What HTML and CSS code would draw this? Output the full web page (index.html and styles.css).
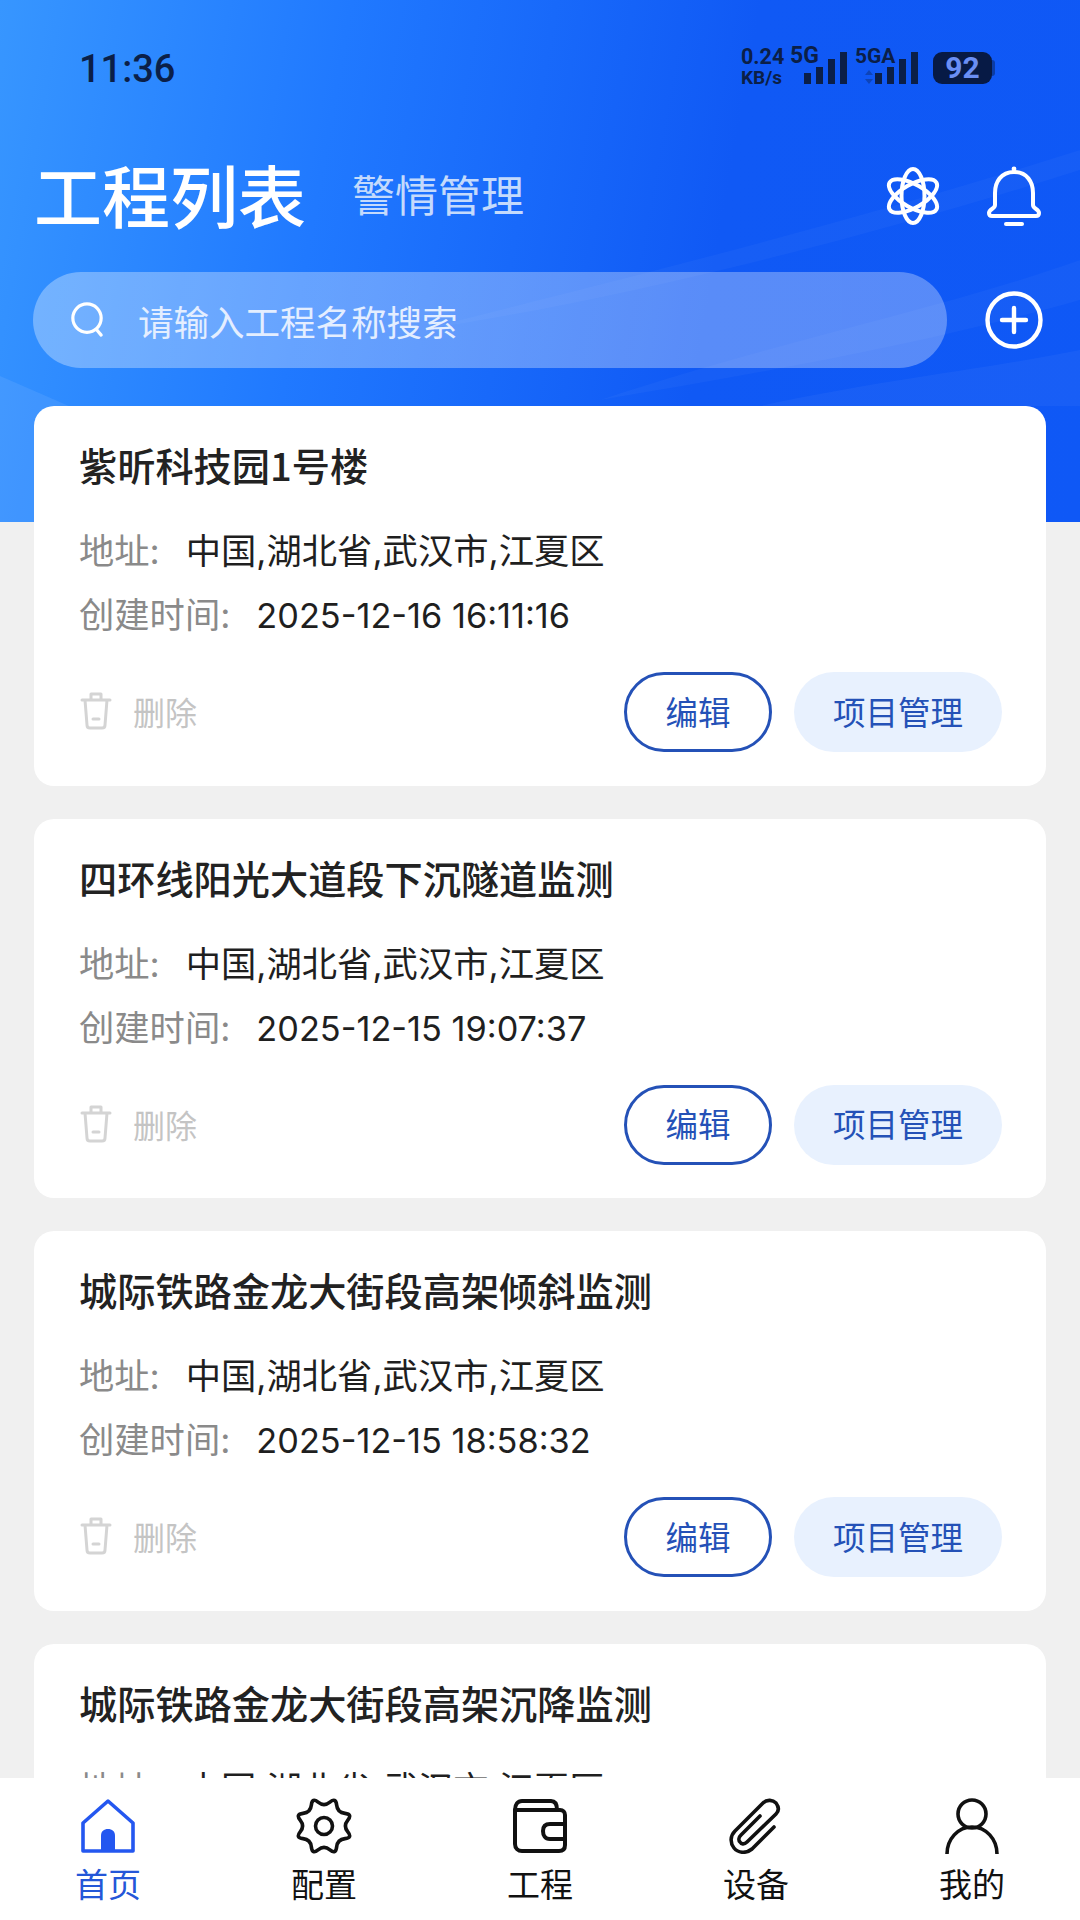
FILE: index.html
```html
<!DOCTYPE html>
<html lang="zh-CN">

<head>
  <meta charset="UTF-8">
  <meta name="viewport" content="width=device-width, initial-scale=1.0">
  <title>工程列表</title>
  <link rel="stylesheet" href="styles.css">
</head>

<body>
  <div class="app">
    <div class="hero">
      <svg class="hero-waves" viewBox="0 0 1080 522" preserveAspectRatio="none">
        <path d="M0 376 L170 450 L170 522 L0 522 Z" fill="#fff" opacity="0.08" />
        <path d="M420 330 C620 280 860 220 1080 150 L1080 170 C860 240 620 300 420 330 Z" fill="#fff" opacity="0.03" />
        <path d="M600 400 C780 340 940 310 1080 260 L1080 300 C940 340 780 370 600 400 Z" fill="#fff" opacity="0.03" />
        <path d="M760 406 C880 380 980 370 1080 350 L1080 406 Z" fill="#fff" opacity="0.04" />
      </svg>

      <div class="status-bar">
        <span class="clock">11:36</span>
        <div class="status-right">
          <div class="speed"><b>0.24</b><b>KB/s</b></div>
          <div class="net"><b>5G</b>
            <div class="bars"><i class="b1"></i><i class="b2"></i><i class="b3"></i><i class="b4"></i></div>
          </div>
          <div class="net net-a"><b>5GA</b>
            <svg class="net-arrows" viewBox="0 0 8 14" fill="#0b1f48">
              <path d="M4 0 L8 5 L0 5 Z M4 14 L8 9 L0 9 Z" />
            </svg>
            <div class="bars"><i class="b1"></i><i class="b2"></i><i class="b3"></i><i class="b4"></i></div>
          </div>
          <div class="battery">92</div>
        </div>
      </div>

      <div class="title-row">
        <h1>工程列表</h1>
        <span class="subtab">警情管理</span>
        <div class="title-icons">
          <svg class="icon-atom" viewBox="0 0 56 60" fill="none" stroke="#fff" stroke-width="4">
            <ellipse cx="28" cy="30" rx="11.5" ry="27" />
            <ellipse cx="28" cy="30" rx="11.5" ry="27" transform="rotate(60 28 30)" />
            <ellipse cx="28" cy="30" rx="11.5" ry="27" transform="rotate(120 28 30)" />
          </svg>
          <svg class="icon-bell" viewBox="0 0 56 60" fill="none" stroke="#fff" stroke-width="4" stroke-linecap="round" stroke-linejoin="round">
            <path d="M28 6 C15 6 9 16 9 27 L9 39 C9 43 3 43 3 47 C3 49 4 50 6 50 L50 50 C52 50 53 49 53 47 C53 43 47 43 47 39 L47 27 C47 16 41 6 28 6 Z" />
            <path d="M20 58 L36 58" />
            <circle cx="28" cy="3" r="2.4" fill="#fff" stroke="none" />
          </svg>
        </div>
      </div>

      <div class="search-row">
        <div class="search-box">
          <svg class="icon-search" viewBox="0 0 36 38" fill="none" stroke="#fff" stroke-width="3.4" stroke-linecap="round">
            <circle cx="18" cy="17" r="15" />
            <path d="M28 29 L33 35" />
          </svg>
          <span>请输入工程名称搜索</span>
        </div>
        <svg class="icon-add" viewBox="0 0 58 58" fill="none" stroke="#fff" stroke-width="4.4" stroke-linecap="round">
          <circle cx="29" cy="29" r="26.5" />
          <path d="M29 17 L29 41 M17 29 L41 29" />
        </svg>
      </div>
    </div>

    <div class="list">
      <div class="card">
        <div class="card-title">紫昕科技园1号楼</div>
        <p class="row"><span class="label">地址:</span>中国,湖北省,武汉市,江夏区</p>
        <p class="row"><span class="label">创建时间:</span><span class="time">2025-12-16 16:11:16</span></p>
        <div class="card-foot">
          <div class="delete">
            <svg class="icon-trash" viewBox="0 0 32 38" fill="none" stroke="#d4d4d4" stroke-width="3" stroke-linecap="round" stroke-linejoin="round">
              <path d="M2 8 L30 8 M11 8 L11 2 L21 2 L21 8 M5 8 L7 33 C7 35 8 36 10 36 L22 36 C24 36 25 35 25 33 L27 8 M13 27 L19 27" />
            </svg>
            <span>删除</span>
          </div>
          <button class="btn btn-edit">编辑</button>
          <button class="btn btn-manage">项目管理</button>
        </div>
      </div>

      <div class="card">
        <div class="card-title">四环线阳光大道段下沉隧道监测</div>
        <p class="row"><span class="label">地址:</span>中国,湖北省,武汉市,江夏区</p>
        <p class="row"><span class="label">创建时间:</span><span class="time">2025-12-15 19:07:37</span></p>
        <div class="card-foot">
          <div class="delete">
            <svg class="icon-trash" viewBox="0 0 32 38" fill="none" stroke="#d4d4d4" stroke-width="3" stroke-linecap="round" stroke-linejoin="round">
              <path d="M2 8 L30 8 M11 8 L11 2 L21 2 L21 8 M5 8 L7 33 C7 35 8 36 10 36 L22 36 C24 36 25 35 25 33 L27 8 M13 27 L19 27" />
            </svg>
            <span>删除</span>
          </div>
          <button class="btn btn-edit">编辑</button>
          <button class="btn btn-manage">项目管理</button>
        </div>
      </div>

      <div class="card">
        <div class="card-title">城际铁路金龙大街段高架倾斜监测</div>
        <p class="row"><span class="label">地址:</span>中国,湖北省,武汉市,江夏区</p>
        <p class="row"><span class="label">创建时间:</span><span class="time">2025-12-15 18:58:32</span></p>
        <div class="card-foot">
          <div class="delete">
            <svg class="icon-trash" viewBox="0 0 32 38" fill="none" stroke="#d4d4d4" stroke-width="3" stroke-linecap="round" stroke-linejoin="round">
              <path d="M2 8 L30 8 M11 8 L11 2 L21 2 L21 8 M5 8 L7 33 C7 35 8 36 10 36 L22 36 C24 36 25 35 25 33 L27 8 M13 27 L19 27" />
            </svg>
            <span>删除</span>
          </div>
          <button class="btn btn-edit">编辑</button>
          <button class="btn btn-manage">项目管理</button>
        </div>
      </div>

      <div class="card">
        <div class="card-title">城际铁路金龙大街段高架沉降监测</div>
        <p class="row"><span class="label">地址:</span>中国,湖北省,武汉市,江夏区</p>
      </div>
    </div>

    <div class="tabbar">
      <div class="tab active">
        <svg viewBox="0 0 56 56" fill="none" stroke="#2457f0" stroke-width="3.6" stroke-linejoin="round">
          <path d="M28 3 L53 25 L53 53 L3 53 L3 25 Z" />
          <path d="M21 53 L21 38 C21 33 24 31 28 31 C32 31 35 33 35 38 L35 53 Z" fill="#2457f0" stroke="none" />
        </svg>
        <span>首页</span>
      </div>
      <div class="tab">
        <svg viewBox="0 0 56 56" fill="none" stroke="#111" stroke-width="3.6" stroke-linejoin="round">
          <path d="M33.93 4.18 Q39.86 -0.64 40.63 6.98 Q41.4 14.6 49.02 15.37 Q56.64 16.14 51.82 22.07 Q47 28 51.82 33.93 Q56.64 39.86 49.02 40.63 Q41.4 41.4 40.63 49.02 Q39.86 56.64 33.93 51.82 Q28 47 22.07 51.82 Q16.14 56.64 15.37 49.02 Q14.6 41.4 6.98 40.63 Q-0.64 39.86 4.18 33.93 Q9 28 4.18 22.07 Q-0.64 16.14 6.98 15.37 Q14.6 14.6 15.37 6.98 Q16.14 -0.64 22.07 4.18 Q28 9 33.93 4.18 Z" />
          <circle cx="28" cy="28" r="8.5" />
        </svg>
        <span>配置</span>
      </div>
      <div class="tab">
        <svg viewBox="0 0 56 56" fill="none" stroke="#111" stroke-width="4" stroke-linejoin="round" stroke-linecap="round">
          <path d="M3 12 C3 6 6 3 10 3 L39 3 C43 3 45 6 45 12" />
          <path d="M3 12 L3 46 C3 50 6 53 10 53 L47 53 C51 53 53 51 53 47 L53 17 C53 14 51 12 48 12 L3 12" />
          <path d="M53 26 L38 26 C33 26 31 29 31 33 C31 37 33 41 38 41 L53 41" />
        </svg>
        <span>工程</span>
      </div>
      <div class="tab">
        <svg viewBox="0 0 56 56" fill="none" stroke="#111" stroke-width="3.6" stroke-linecap="round" stroke-linejoin="round">
          <path d="M46 29 L24 51 C18 56 10 55 6 50 C2 45 2 38 7 33 L35 5 C39 1 45 2 48 5 C51 9 51 13 48 16 L19 44 C16 47 13 46 12 44 C10 42 11 39 13 37 L32 18" />
        </svg>
        <span>设备</span>
      </div>
      <div class="tab">
        <svg viewBox="0 0 56 56" fill="none" stroke="#111" stroke-width="3.6">
          <circle cx="28" cy="16" r="14" />
          <path d="M3 56 C3 41 14 29 28 29 C42 29 53 41 53 56" />
        </svg>
        <span>我的</span>
      </div>
    </div>
  </div>
</body>

</html>
```

FILE: styles.css
```css
body {
  margin: 0;
  padding: 0;
  background-color: #f0f0f0;
  font-family: "Noto Sans CJK SC", "Noto Sans", sans-serif;
}

.app {
  position: relative;
  width: 1080px;
  height: 1920px;
  overflow: hidden;
}

/* 顶部蓝色区域 */
.hero {
  position: relative;
  height: 522px;
  background: linear-gradient(100deg, #3796ff 0%, #2079ff 30%, #1059f5 65%, #0f58f6 100%);
}

.hero-waves {
  position: absolute;
  left: 0;
  top: 0;
  width: 1080px;
  height: 522px;
}

.status-bar {
  position: relative;
  height: 153px;
  padding: 46px 88px 0 79px;
  box-sizing: border-box;
  display: flex;
  justify-content: space-between;
  align-items: flex-start;
  color: #0b1f48;
}

.clock {
  font-family: Roboto, sans-serif;
  font-size: 38px;
  font-weight: 500;
  line-height: 46px;
}

.status-right {
  display: flex;
  align-items: flex-start;
}

.speed {
  display: flex;
  flex-direction: column;
  width: 42px;
  margin-right: 7px;
  font-family: Roboto, sans-serif;
  font-size: 19px;
  line-height: 21px;
  white-space: nowrap;
}

.speed b:first-child {
  font-size: 21.5px;
}

.net {
  position: relative;
  width: 57px;
  height: 38px;
  margin-right: 8px;
  font-family: Roboto, sans-serif;
  font-size: 23px;
  line-height: 20px;
}

.net-a {
  width: 63px;
  margin-right: 15px;
}

.net-a b {
  font-size: 21px;
}

.net-arrows {
  position: absolute;
  left: 10px;
  bottom: 0;
  width: 8px;
  height: 14px;
  opacity: 0.35;
}

.bars {
  position: absolute;
  right: 0;
  bottom: 0;
  display: flex;
  align-items: flex-end;
  gap: 5px;
}

.bars i {
  display: block;
  width: 7px;
  background-color: #0b1f48;
}

.bars .b1 { height: 11px; }
.bars .b2 { height: 17px; }
.bars .b3 { height: 25px; }
.bars .b4 { height: 32px; }

.battery {
  position: relative;
  width: 59px;
  height: 32px;
  margin-top: 6px;
  border-radius: 9px;
  background-color: #071a45;
  color: #6a8ff5;
  font-family: Roboto, sans-serif;
  font-size: 30px;
  font-weight: 700;
  line-height: 32px;
  text-align: center;
}

.battery::after {
  content: "";
  position: absolute;
  left: 59px;
  top: 8px;
  width: 3px;
  height: 16px;
  border-radius: 0 3px 3px 0;
  background-color: rgba(7, 26, 69, 0.45);
}

.title-row {
  position: relative;
  display: flex;
  align-items: center;
  height: 80px;
  padding: 0 38px 0 36px;
}

.title-row h1 {
  margin: 0;
  margin-left: -2px;
  font-size: 68px;
  font-weight: 500;
  color: #fff;
}

.subtab {
  margin-left: 46px;
  font-size: 43px;
  color: #c4dafc;
}

.title-icons {
  margin-left: auto;
  margin-top: 6px;
  display: flex;
  align-items: center;
  gap: 45px;
}

.icon-atom {
  width: 56px;
  height: 60px;
}

.icon-bell {
  width: 56px;
  height: 60px;
}

.search-row {
  position: relative;
  display: flex;
  align-items: center;
  justify-content: space-between;
  margin-top: 39px;
  padding: 0 37px 0 33px;
}

.search-box {
  display: flex;
  align-items: center;
  width: 914px;
  height: 96px;
  border-radius: 48px;
  box-sizing: border-box;
  padding-left: 37px;
  background: linear-gradient(90deg, rgba(255, 255, 255, 0.32), rgba(255, 255, 255, 0.3));
}

.search-box span {
  margin-left: 34px;
  font-size: 35.5px;
  color: #e4eeff;
}

.icon-search {
  width: 34px;
  height: 36px;
}

.icon-add {
  width: 58px;
  height: 58px;
}

/* 工程卡片 */
.list {
  position: absolute;
  left: 34px;
  top: 406px;
  width: 1012px;
  display: flex;
  flex-direction: column;
  gap: 33px;
}

.card {
  height: 379.5px;
  box-sizing: border-box;
  padding: 34px 44px 0 45px;
  background-color: #fff;
  border-radius: 20px;
}

.card-title {
  font-size: 38.2px;
  font-weight: 500;
  line-height: 50px;
  color: #222;
  margin-bottom: 30px;
}

.row {
  margin: 0;
  font-size: 35.3px;
  line-height: 64px;
  color: #1f1f1f;
  font-family: Inter, "Noto Sans CJK SC", sans-serif;
}

.label {
  margin-right: 26px;
  color: #8a8a8a;
}

.time {
  font-size: 34.3px;
}

.card-foot {
  display: flex;
  align-items: center;
  margin-top: 24px;
}

.delete {
  display: flex;
  align-items: center;
  margin-right: auto;
  margin-bottom: 2px;
  color: #c4c4c4;
  font-size: 32px;
}

.icon-trash {
  width: 34px;
  height: 38px;
  margin-right: 20px;
}

.btn {
  height: 80px;
  padding: 0 0 4px;
  border-radius: 40px;
  font-family: inherit;
  font-size: 32.5px;
  color: #2451b7;
  box-sizing: border-box;
}

.btn-edit {
  width: 148px;
  margin-right: 22px;
  background-color: #fff;
  border: 3px solid #2451b7;
}

.btn-manage {
  width: 208px;
  background-color: #e8f1fe;
  border: none;
}

/* 底部导航 */
.tabbar {
  position: absolute;
  left: 0;
  bottom: 0;
  width: 1080px;
  height: 142px;
  display: flex;
  justify-content: space-between;
  box-sizing: border-box;
  padding: 20px 0 0;
  background-color: #fff;
}

.tab {
  width: 216px;
  display: flex;
  flex-direction: column;
  align-items: center;
  font-size: 33px;
  line-height: 44px;
  color: #111;
}

.tab svg {
  width: 56px;
  height: 56px;
  margin-bottom: 7px;
}

.tab.active {
  color: #2457d8;
}
```
